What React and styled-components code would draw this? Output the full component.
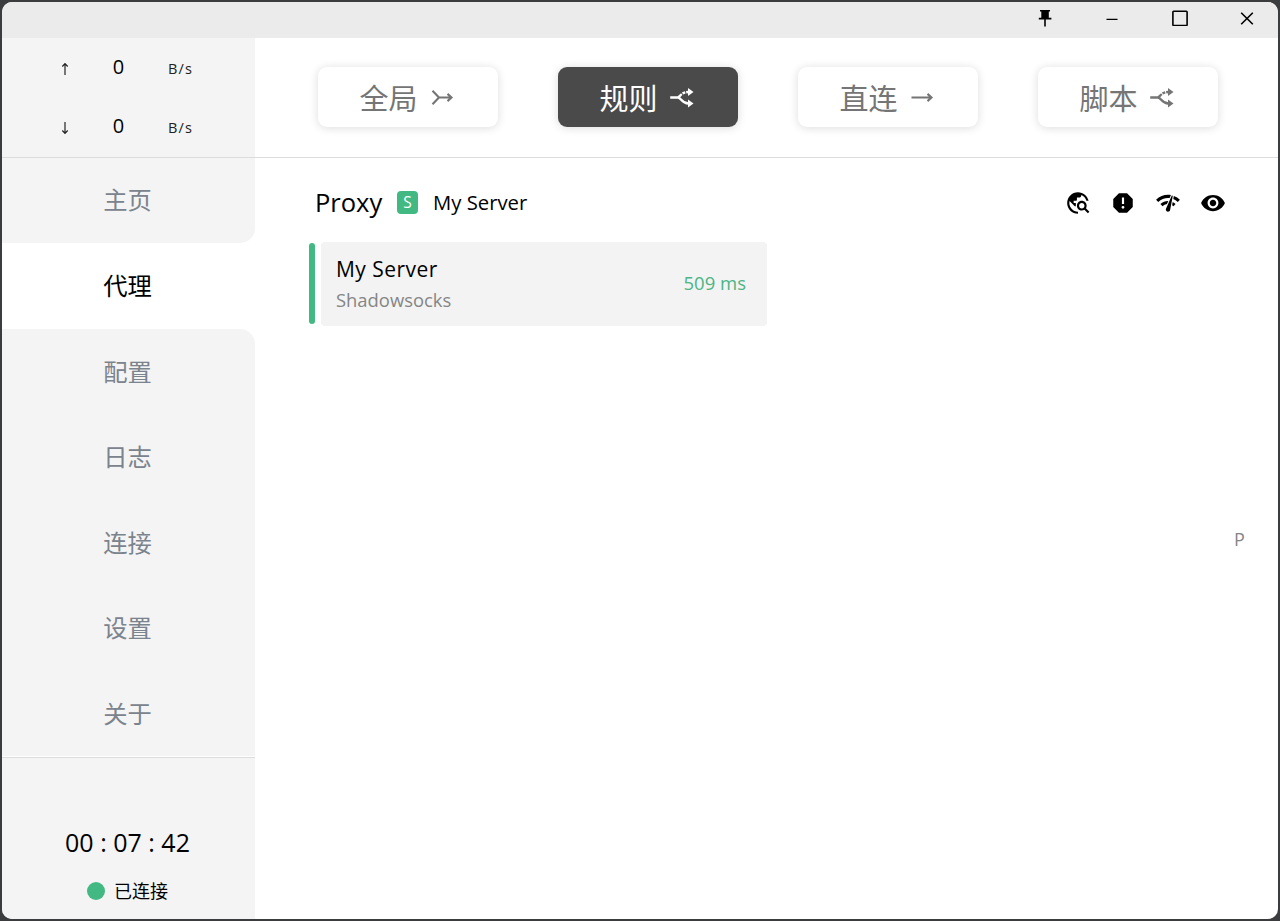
import React from 'react';
import styled, { createGlobalStyle } from 'styled-components';
import { MdTravelExplore, MdReport, MdNetworkCheck, MdVisibility } from 'react-icons/md';

const GlobalStyle = createGlobalStyle`
  *, *::before, *::after { box-sizing: border-box; }
  html, body { margin: 0; height: 100%; background: #3b3c3e; overflow: hidden; }
  body { font-family: "Open Sans", "Noto Sans CJK SC", sans-serif; color: #000; }
`;

const Desktop = styled.div`
  width: 1280px;
  height: 921px;
  padding: 2px;
`;

const Window = styled.div`
  display: flex;
  flex-direction: column;
  height: 917px;
  border-radius: 10px;
  overflow: hidden;
  background: #fff;
`;

const TitleBar = styled.header`
  display: flex;
  flex: none;
  justify-content: flex-end;
  height: 36px;
  padding-right: 14px;
  gap: 33.5px;
  background: #ebebeb;
`;

const WindowButton = styled.button`
  display: flex;
  align-items: center;
  justify-content: center;
  width: 34px;
  height: 32px;
  padding: 0;
  border: 0;
  background: none;
  svg { display: block; }
`;

const Body = styled.div`
  display: flex;
  flex: 1;
  min-height: 0;
`;

const Sidebar = styled.aside`
  display: flex;
  flex-direction: column;
  flex: none;
  width: 253px;
  background: #f4f4f4;
`;

const Traffic = styled.div`
  height: 120px;
  border-bottom: 1px solid #dcdcdc;
`;

const TrafficRow = styled.div`
  display: grid;
  grid-template-columns: 38px 38px 53px;
  column-gap: 16px;
  align-items: center;
  height: 59px;
  padding-left: 44px;
  text-align: center;
`;

const Arrow = styled.svg`
  display: block;
  margin: 3px auto 0;
`;

const Speed = styled.span`
  padding: 0 1px 2px 0;
  font-size: 20px;
  line-height: 28px;
`;

const Unit = styled.span`
  padding-top: 3px;
  font-size: 14.5px;
  letter-spacing: 1.2px;
  line-height: 20px;
  color: #222;
`;

const Nav = styled.nav`
  display: flex;
  flex-direction: column;
  flex: none;
  height: 600px;
  padding-bottom: 1px;
  border-bottom: 1px solid #dcdcdc;
  background: #fff;
`;

const NavItem = styled.a`
  display: flex;
  flex: ${(p) => (p.$edge === 'bottom' ? '0 0 85px' : '1 1 0')};
  align-items: center;
  justify-content: center;
  font-size: 24.3px;
  line-height: 36px;
  padding: ${(p) => (p.$edge === 'bottom' ? '0 2px 2px 0' : '1px 2px 0 0')};
  color: ${(p) => (p.$active ? '#000' : '#7b838d')};
  background: ${(p) => (p.$active ? '#fff' : '#f4f4f4')};
  border-radius: ${(p) => (p.$edge === 'bottom' ? '0 0 15px 0' : p.$edge === 'top' ? '0 15px 0 0' : '0')};
`;

const Status = styled.div`
  flex: 1;
  padding: 65px 2px 0 0;
  text-align: center;
`;

const Clock = styled.div`
  font-size: 25px;
  line-height: 38px;
  white-space: pre;
`;

const Connection = styled.div`
  display: flex;
  align-items: center;
  justify-content: center;
  gap: 9px;
  margin-top: 17px;
  font-size: 18px;
  line-height: 26px;
`;

const Dot = styled.span`
  width: 18px;
  height: 18px;
  border-radius: 50%;
  background: #42b983;
`;

const Main = styled.main`
  flex: 1;
  display: flex;
  flex-direction: column;
`;

const Modes = styled.div`
  display: flex;
  flex: none;
  gap: 60px;
  height: 120px;
  padding: 29px 0 0 63px;
  border-bottom: 1px solid #dcdcdc;
`;

const ModeButton = styled.button`
  display: flex;
  align-items: center;
  gap: 12.5px;
  width: 180px;
  height: 60px;
  padding: 3px 0 0 41.5px;
  border: 0;
  border-radius: 9px;
  font: inherit;
  font-size: 29px;
  line-height: 40px;
  color: ${(p) => (p.$active ? '#fff' : '#757575')};
  background: ${(p) => (p.$active ? '#4a4a4a' : '#fff')};
  box-shadow: 0 1px 10px rgba(0, 0, 0, 0.14);
  svg { display: block; }
`;

const Content = styled.section`
  display: flex;
  flex: 1;
`;

const Group = styled.div`
  flex: none;
  width: 976px;
  padding: 22px 0 0 52px;
`;

const GroupHeader = styled.div`
  display: flex;
  align-items: center;
  height: 45px;
  padding-left: 8px;
`;

const GroupName = styled.h2`
  margin: 0;
  width: 82px;
  padding-bottom: 1px;
  font-size: 25.5px;
  font-weight: 400;
  line-height: 38px;
`;

const TypeBadge = styled.span`
  display: flex;
  align-items: center;
  justify-content: center;
  width: 21px;
  height: 23px;
  padding-bottom: 1px;
  border-radius: 4px;
  color: #fff;
  background: #42b983;
  font-size: 15.5px;
  line-height: 20px;
`;

const Selected = styled.span`
  margin-left: 15px;
  padding-bottom: 2px;
  font-size: 20.3px;
  line-height: 30px;
`;

const Actions = styled.div`
  display: flex;
  gap: 19px;
  margin-left: auto;
  padding-right: 5px;
  svg { display: block; width: 26px; height: 26px; }
`;

const ProxyRow = styled.div`
  display: flex;
  align-items: flex-start;
  gap: 6px;
  margin: 17px 0 0 2px;
`;

const Marker = styled.span`
  width: 6px;
  height: 81px;
  margin-top: 1px;
  border-radius: 3px;
  background: #42b983;
`;

const ProxyCard = styled.article`
  display: flex;
  align-items: center;
  justify-content: space-between;
  width: 446px;
  height: 84px;
  padding: 0 21px 0 15px;
  border-radius: 4px;
  background: #f3f3f3;
`;

const ProxyName = styled.div`
  font-size: 21px;
  letter-spacing: 0.45px;
  line-height: 30px;
`;

const ProxyType = styled.div`
  margin-top: 1px;
  font-size: 18.4px;
  line-height: 30px;
  color: #858585;
`;

const Delay = styled.span`
  padding-bottom: 2px;
  font-size: 18.5px;
  line-height: 28px;
  color: #4bb585;
`;

const IndexRail = styled.div`
  display: flex;
  align-items: center;
  flex: 1;
  padding-left: 3px;
  font-size: 18px;
  color: #858585;
`;

const Glyph = ({ children, w = 24, h = 24, sw = 2.1 }) => (
  <svg width={w} height={h} viewBox={`0 0 ${w} ${h}`} fill="none" stroke="currentColor" strokeWidth={sw}>
    {children}
  </svg>
);

const MergeIcon = () => (
  <Glyph>
    <path d="M2.5 3.8l6.5 6.7-6.5 6.8M9 10.5h12M17.5 6.9l4 3.6-4 3.6" />
  </Glyph>
);

const SplitIcon = () => (
  <Glyph sw={2.4}>
    <path d="M0.2 10.5h7.6c3.6 0 3.6 6 10.6 6" />
    <path d="M8 10.3c2.6-1.2 3.4-5.1 10.4-5.3" strokeDasharray="5 1 3 1 4" />
    <path d="M18 1l5.5 4-5.5 4zM18 12.4l5.5 4-5.5 4z" fill="currentColor" stroke="none" />
  </Glyph>
);

const DirectIcon = () => (
  <Glyph>
    <path d="M1.5 10.5h20M17.5 6.9l4 3.6-4 3.6" />
  </Glyph>
);

const MODES = [
  { label: '全局', Icon: MergeIcon },
  { label: '规则', Icon: SplitIcon, active: true },
  { label: '直连', Icon: DirectIcon },
  { label: '脚本', Icon: SplitIcon },
];

const NAV = [
  { label: '主页', edge: 'bottom' },
  { label: '代理', active: true },
  { label: '配置', edge: 'top' },
  { label: '日志' },
  { label: '连接' },
  { label: '设置' },
  { label: '关于' },
];

export default function App() {
  return (
    <>
      <GlobalStyle />
      <Desktop>
        <Window>
          <TitleBar>
            <WindowButton aria-label="Pin">
              <svg width="14" height="18" viewBox="0 0 14 18">
                <path d="M2 1h10v1.6h-1.2v6.2h2.6v1.8H7.8V17.5H6.2V10.6H0.8V8.8h2.5V2.6H2z" fill="#000" />
              </svg>
            </WindowButton>
            <WindowButton aria-label="Minimize">
              <Glyph w={12} h={12} sw={1.4}><path d="M0.5 7.4h11" /></Glyph>
            </WindowButton>
            <WindowButton aria-label="Maximize">
              <Glyph w={16} h={16} sw={1.6}><rect x="0.9" y="1.3" width="14.2" height="14.2" rx="0.8" /></Glyph>
            </WindowButton>
            <WindowButton aria-label="Close">
              <Glyph w={14} h={14} sw={1.6}><path d="M1.2 1.7l11.6 11.6M12.8 1.7L1.2 13.3" /></Glyph>
            </WindowButton>
          </TitleBar>
          <Body>
            <Sidebar>
              <Traffic>
                {['up', 'down'].map((dir) => (
                  <TrafficRow key={dir}>
                    <Arrow width="8" height="14" viewBox="0 0 8 14" fill="none" stroke="#222" strokeWidth="1.2">
                      <path d={dir === 'up' ? 'M4 13V2M1.3 4.5L4 1.6l2.7 2.9' : 'M4 1v11M1.3 9.5L4 12.4l2.7-2.9'} />
                    </Arrow>
                    <Speed>0</Speed>
                    <Unit>B/s</Unit>
                  </TrafficRow>
                ))}
              </Traffic>
              <Nav>
                {NAV.map(({ label, active, edge }) => (
                  <NavItem key={label} $active={active} $edge={edge}>{label}</NavItem>
                ))}
              </Nav>
              <Status>
                <Clock>00 : 07 : 42</Clock>
                <Connection><Dot />已连接</Connection>
              </Status>
            </Sidebar>
            <Main>
              <Modes>
                {MODES.map(({ label, Icon, active }) => (
                  <ModeButton key={label} $active={active}>{label}<Icon /></ModeButton>
                ))}
              </Modes>
              <Content>
                <Group>
                  <GroupHeader>
                    <GroupName>Proxy</GroupName>
                    <TypeBadge>S</TypeBadge>
                    <Selected>My Server</Selected>
                    <Actions>
                      <MdTravelExplore />
                      <MdReport />
                      <MdNetworkCheck />
                      <MdVisibility />
                    </Actions>
                  </GroupHeader>
                  <ProxyRow>
                    <Marker />
                    <ProxyCard>
                      <div>
                        <ProxyName>My Server</ProxyName>
                        <ProxyType>Shadowsocks</ProxyType>
                      </div>
                      <Delay>509 ms</Delay>
                    </ProxyCard>
                  </ProxyRow>
                </Group>
                <IndexRail>P</IndexRail>
              </Content>
            </Main>
          </Body>
        </Window>
      </Desktop>
    </>
  );
}
